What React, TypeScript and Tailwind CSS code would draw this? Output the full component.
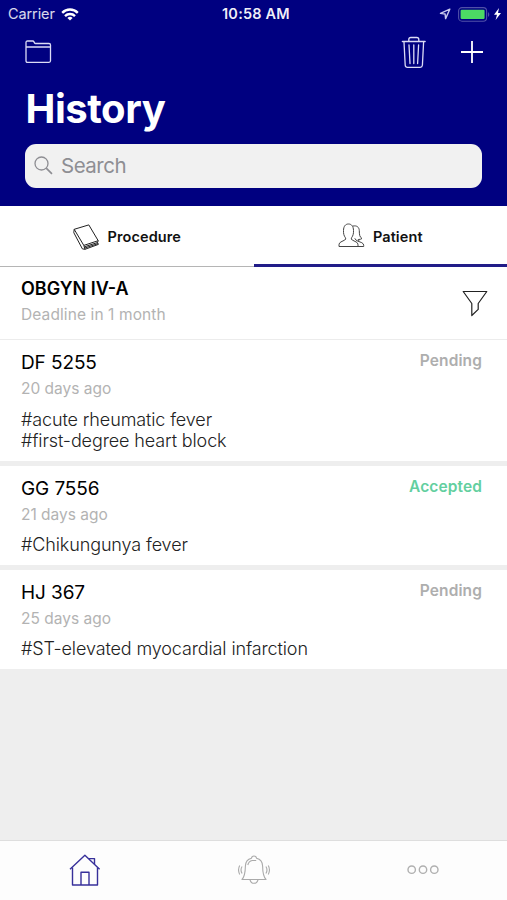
import { clsx } from "clsx"

type Status = "Pending" | "Accepted"

interface HistoryEntry {
  id: string
  date: string
  tags: string[]
  status: Status
}

const entries: HistoryEntry[] = [
  {
    id: "DF 5255",
    date: "20 days ago",
    tags: ["#acute rheumatic fever", "#first-degree heart block"],
    status: "Pending",
  },
  { id: "GG 7556", date: "21 days ago", tags: ["#Chikungunya fever"], status: "Accepted" },
  { id: "HJ 367", date: "25 days ago", tags: ["#ST-elevated myocardial infarction"], status: "Pending" },
]

function StatusBar() {
  return (
    <div className="grid h-7 grid-cols-3 items-center pl-2 pr-1.5">
      <div className="flex items-center gap-1.5">
        <span className="text-[14.5px] tracking-[-0.1px] text-white/85">Carrier</span>
        <svg className="h-[13px] w-[18px]" viewBox="0 0 18 13" fill="none" stroke="white" strokeWidth="2.4">
          <path d="M1.2 4.800a11 11 0 0 1 15.6 0" />
          <path d="M4 8.100a7.100 7.100 0 0 1 10 0" />
          <path d="M9 12.6 6.4 10a3.7 3.7 0 0 1 5.2 0z" fill="white" stroke="none" />
        </svg>
      </div>
      <span className="ml-[3px] justify-self-center text-[14.5px] font-semibold tracking-[0.2px] text-white/95">
        10:58 AM
      </span>
      <div className="flex items-center justify-end">
        <svg className="mr-0.5 h-3 w-3" viewBox="0 0 12 12" fill="none" stroke="#c9c9ee" strokeWidth="1.4" strokeLinejoin="round">
          <path d="M10.800 1.200 1.500 5.400l4.600.6.500 4.600z" />
        </svg>
        <svg className="ml-[5px] h-[15px] w-8" viewBox="0 0 32 15" fill="none">
          <rect x="0.6" y="0.6" width="28" height="13.6" rx="3.4" stroke="#5050a8" strokeWidth="1.1" />
          <rect x="2.6" y="2.8" width="24" height="9.2" rx="1.2" fill="#4cd964" />
          <path d="M30 5.2c1.7.6 1.7 4 0 4.5z" fill="#5050a8" />
        </svg>
        <svg className="ml-1 h-3 w-[7px]" viewBox="0 0 7 12" fill="white">
          <path d="M5 0 0 6.7h3L1.6 12 7 5H4z" />
        </svg>
      </div>
    </div>
  )
}

function FolderIcon() {
  return (
    <svg className="h-6 w-7" viewBox="0 0 28 24" fill="none" stroke="#dcdcf6" strokeWidth="1.3" strokeLinejoin="round">
      <path d="M2 7V2.500q0-1.500 1.500-1.500h5.300q.8 0 1.200.9l.5 1q.3.600 1.100.600H25q1.500 0 1.500 1.500V20.800q0 1.500-1.500 1.500h-21.500Q2 22.300 2 20.800zH26.500" />
    </svg>
  )
}

function TrashIcon() {
  return (
    <svg className="h-[33px] w-[26px]" viewBox="0 0 26 33" fill="none" stroke="#dcdcf6" strokeWidth="1.3" strokeLinecap="round">
      <path d="M1.500 5.500h22.500" strokeWidth="1.600" />
      <path d="M7.800 5V3.500Q7.800 1.500 9.800 1.500h6q2 0 2 2V5" />
      <path d="M3 6l1.200 23.300q.2 2 2.200 2h12.800q2 0 2.200-2L22.600 6" />
      <path d="M8 9l1 18.500M12.800 9v18.500M17.600 9l-1 18.500" />
    </svg>
  )
}

function BookIcon() {
  return (
    <svg className="h-[26px] w-[27px]" viewBox="0 0 27 26" fill="none" stroke="#222" strokeWidth="1" strokeLinejoin="round">
      <path d="M1.200 5.300 15.800.900l9.400 15.800-14.400 4.700z" />
      <path d="M1.200 5.300.8 8.700l8.600 16.200 2.600.4-1.200-3.900" />
      <path d="M25.200 16.700q-1.400 1.700.2 3.700L12 25.300M11.400 22.800l13.200-4.300M11.600 24.100l13.400-4.500" />
    </svg>
  )
}

function PeopleIcon() {
  return (
    <svg className="h-[25px] w-[27px]" viewBox="0 0 27 25" fill="none" stroke="#444" strokeWidth="1" strokeLinejoin="round">
      <path d="M1 23.500v-1.700q0-2 2-2.900l3.800-1.900q1.600-.9.600-2.300C5.900 12.700 5.400 10.700 5.500 7.500 5.600 3.300 7.400 1 10.500 1s4.900 2.300 5 6.500c.1 3.200-.4 5.200-1.900 7.200q-1 1.400.6 2.300l3.800 1.900q2 .9 2 2.900v1.700z" />
      <path d="M14.800 3.100c4-.9 6.300 1 6.500 4.500.1 3.800.1 6.400 2.700 7.900-1 .8-2.300 1-3.800 1" />
      <path d="M16.800 15.300q1 2.300 3.200 2.900l3.800 1.500q1.900 1 1.900 2.600v1.200H20M20.200 16.500l.8 1.500" />
    </svg>
  )
}

function FunnelIcon() {
  return (
    <svg className="h-[27px] w-[26px]" viewBox="0 0 26 27" fill="none" stroke="#222" strokeWidth="1.2" strokeLinejoin="round">
      <path d="M1.200 1.500h23.600l-8.600 12v5.900l-6.400 6.100V13.500z" />
    </svg>
  )
}

function HomeIcon() {
  return (
    <svg className="h-8 w-8" viewBox="0 0 32 32" fill="none" stroke="#37309a" strokeWidth="1.4" strokeLinejoin="round">
      <path d="M1 15.300 15.900 1.300l14.700 14" />
      <path d="M3.500 13.500V31h25V13.500" />
      <path d="M20.500 5V4.600h5V10.300" />
      <path d="M12 31V18.300h8V31" />
    </svg>
  )
}

function BellIcon() {
  return (
    <svg className="h-[30px] w-8" viewBox="0 0 32 30" fill="none" stroke="#aaa" strokeWidth="1.1" strokeLinejoin="round">
      <path d="M13.500 3.300q.2-2.300 2.500-2.300t2.500 2.300c3.900 1 6 3.800 6.100 7.700.1 6.700.6 10.500 3.400 13.500H4c2.800-3 3.300-6.800 3.400-13.500.1-3.900 2.200-6.700 6.100-7.700z" />
      <path d="M12 24.800q1 3.500 4 3.500t4-3.500M9.800 10q1-4 4.400-4.500h4" />
      <path d="M4.100 11.500q-2.200 3.500 0 7M1.700 10.500q-2.300 4.500 0 9M27.900 11.500q2.200 3.500 0 7M30.300 10.500q2.300 4.500 0 9" />
    </svg>
  )
}

function EntryRow({ entry }: { entry: HistoryEntry }) {
  return (
    <article className="flex justify-between bg-white px-[21px] pt-[11px] pb-[9.5px]">
      <div>
        <h3 className="text-[19px] leading-6 tracking-[-0.1px] text-black">{entry.id}</h3>
        <p className="mt-0.5 text-[15.5px] leading-6 text-[#b3b3b3]">{entry.date}</p>
        <div className="mt-[7.5px] text-[18px] font-light leading-[21.5px] tracking-[-0.12px] text-[#222]">
          {entry.tags.map((tag) => (
            <p key={tag}>{tag}</p>
          ))}
        </div>
      </div>
      <span
        className={clsx(
          "mr-1 pt-px text-[15.5px] font-semibold leading-[18px] tracking-[0.1px]",
          entry.status === "Accepted" ? "text-[#63cf9f]" : "text-[#aeaeae]",
        )}
      >
        {entry.status}
      </span>
    </article>
  )
}

export default function App() {
  return (
    <div className="flex h-[900px] w-[507px] flex-col overflow-hidden bg-[#eeeeee] font-['Inter','Liberation_Sans',sans-serif]">
      <header className="h-[206px] bg-[#000080]">
        <StatusBar />
        <div className="flex h-12 items-center justify-between pl-6 pr-6">
          <FolderIcon />
          <div className="flex items-center gap-[34px]">
            <TrashIcon />
            <svg className="h-[22px] w-[22px]" viewBox="0 0 22 22" stroke="white" strokeWidth="1.8">
              <path d="M11 0v22M0 11h22" />
            </svg>
          </div>
        </div>
        <h1 className="pl-[25.5px] pt-2 text-[40px] font-bold leading-[50px] tracking-[-0.45px] text-white">History</h1>
        <div className="mx-[25px] mt-2.5 flex h-[43.5px] items-center rounded-[11px] bg-[#f1f1f1] pl-[9px]">
          <svg className="h-[19px] w-[19px]" viewBox="0 0 19 19" fill="none" stroke="#8e8e93" strokeWidth="1.3">
            <circle cx="7.500" cy="7.500" r="6.500" />
            <path d="m12.200 12.200 5.800 5.600" strokeWidth="1.700" />
          </svg>
          <span className="ml-2 pt-px text-[20.500px] tracking-[-0.5px] text-[#8e8e93]">Search</span>
        </div>
      </header>

      <nav className="grid h-[61px] grid-cols-2 bg-white pt-px text-[14.5px] font-semibold text-[#111]">
        <div className="flex items-center justify-center gap-2 border-b border-[#b5b5b5]">
          <BookIcon />
          <span className="pt-px tracking-[0.1px]">Procedure</span>
        </div>
        <div className="flex items-center justify-center gap-2 border-b-[3px] border-[#211c88]">
          <PeopleIcon />
          <span className="pt-0.5 tracking-[0.1px]">Patient</span>
        </div>
      </nav>

      <section className="flex h-[73px] items-center justify-between border-b border-[#ececec] bg-white pl-[21px] pr-[19px]">
        <div className="-mt-0.5">
          <h2 className="text-[18px] font-semibold leading-6 text-black">OBGYN IV-A</h2>
          <p className="mt-0.5 text-[15.5px] leading-6 tracking-[0.1px] text-[#b3b3b3]">Deadline in 1 month</p>
        </div>
        <FunnelIcon />
      </section>

      <main className="flex flex-1 flex-col gap-[4.5px]">
        {entries.map((entry) => (
          <EntryRow key={entry.id} entry={entry} />
        ))}
      </main>

      <footer className="grid h-[60px] grid-cols-3 place-items-center border-t border-[#dedede] bg-[#fdfdfd] pb-0.5">
        <HomeIcon />
        <BellIcon />
        <svg className="h-2.5 w-8" viewBox="0 0 32 10" fill="none" stroke="#b0b0b0" strokeWidth="1.4">
          <circle cx="4.700" cy="4.700" r="3.700" />
          <circle cx="16" cy="4.700" r="3.700" />
          <circle cx="27.300" cy="4.700" r="3.700" />
        </svg>
      </footer>
    </div>
  )
}
